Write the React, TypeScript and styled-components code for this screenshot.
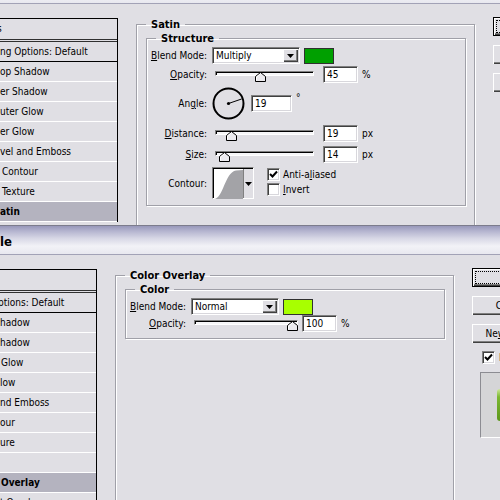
import * as React from "react";
import styled, { createGlobalStyle } from "styled-components";

const COLORS = {
	FACE: "#e0dfe4",
	ETCH: "#a0a0a8",
	SHADOW: "#808080",
	DARK: "#404040",
	WHITE: "#ffffff",
	SELECTED: "#b4b3bf",
	SATIN: "#00a000",
	OVERLAY: "#a8ff00"
};

const FONT = `"DejaVu Sans Condensed", "DejaVu Sans", "Liberation Sans", sans-serif`;

const GlobalStyle = createGlobalStyle`
	html, body {
		margin: 0;
		padding: 0;
		background: ${COLORS.FACE};
	}
	body {
		font-family: ${FONT};
		font-size: 10px;
		color: #000;
		overflow: hidden;
	}
`;

type ListItem = {
	text: string;
	indent?: number;
	kind?: "header" | "blend" | "effect";
	selected?: boolean;
};

export interface DialogProps {
	title?: string;
	listWidth: number;
	items: ListItem[];
	cutTop?: number;
	bodyHeight?: number;
	children: React.ReactNode;
}

const Dialog = ({ title, listWidth, items, cutTop = 0, bodyHeight, children }: DialogProps) => {
	return (
		<Frame $cutTop={cutTop}>
			<TitleBar>{title}</TitleBar>
			<Body $height={bodyHeight}>
				<StyleList $width={listWidth}>
					{items.map((item, i) => (
						<ListRow
							key={i}
							$kind={item.kind || "effect"}
							$selected={!!item.selected}
							$indent={item.indent || 0}
						>
							{item.text}
						</ListRow>
					))}
				</StyleList>
				<Panel>{children}</Panel>
				<ButtonColumn>
					<PushButton $default>
						<FocusRing>OK</FocusRing>
					</PushButton>
					<PushButton>Cancel</PushButton>
					<PushButton>
						Ne<Key>w</Key> Style...
					</PushButton>
					<PreviewToggle>
						<CheckBox checked />
						<span>Preview</span>
					</PreviewToggle>
					<PreviewBox>
						<PreviewBlob />
					</PreviewBox>
				</ButtonColumn>
			</Body>
		</Frame>
	);
};

const CheckBox = ({ checked = false }: { checked?: boolean }) => (
	<CheckSquare>
		{checked && (
			<svg width="9" height="9" viewBox="0 0 9 9">
				<path d="M1 4 L3.5 6.5 L8 1.5" fill="none" stroke="#000" strokeWidth="2" />
			</svg>
		)}
	</CheckSquare>
);

const DropArrow = () => (
	<svg width="7" height="4" viewBox="0 0 7 4">
		<path d="M0 0 H7 L3.5 4 Z" fill="#000" />
	</svg>
);

const Select = ({ value }: { value: string }) => (
	<SelectBox>
		<SelectText>{value}</SelectText>
		<SelectButton>
			<DropArrow />
		</SelectButton>
	</SelectBox>
);

const Slider = ({ pos, width }: { pos: number; width: number }) => (
	<SliderCell $width={width}>
		<Track $width={width} />
		<Thumb style={{ left: 3 + pos * (width - 11) }}>
			<svg width="11" height="10" viewBox="0 0 11 10">
				<path
					d="M0.5 4.5 L5.5 0.5 L10.5 4.5 V9.5 H0.5 Z"
					fill="#ecebef"
					stroke="#000"
				/>
				<path d="M1.5 8.5 V5 L5.5 1.8" fill="none" stroke="#fff" />
			</svg>
		</Thumb>
	</SliderCell>
);

const AngleDial = ({ angle }: { angle: number }) => {
	const r = (angle * Math.PI) / 180;
	const x = 16.5 + 14 * Math.cos(r);
	const y = 16.5 - 14 * Math.sin(r);
	return (
		<svg width="33" height="33" viewBox="0 0 33 33">
			<circle cx="16.5" cy="16.5" r="15" fill="none" stroke="#000" strokeWidth="2" />
			<line x1="16.5" y1="16.5" x2={x} y2={y} stroke="#000" strokeWidth="1" />
			<circle cx="16.5" cy="16.5" r="1.6" fill="#000" />
		</svg>
	);
};

const ContourPicker = () => (
	<ContourBox>
		<CurveArea>
			<svg width="29" height="30" viewBox="0 0 29 30">
				<path d="M0 30 C 9 30 11 3 22 1.5 L29 1 V30 Z" fill="#a3a3a7" />
			</svg>
		</CurveArea>
		<CurveButton>
			<DropArrow />
		</CurveButton>
	</ContourBox>
);

// only the part of each name that shows past the left edge
const satinItems: ListItem[] = [
	{ text: "s", indent: -3, kind: "header" },
	{ text: "ng Options: Default", kind: "blend" },
	{ text: "op Shadow" },
	{ text: "er Shadow" },
	{ text: "uter Glow" },
	{ text: "er Glow" },
	{ text: "vel and Emboss" },
	{ text: "Contour", indent: 2 },
	{ text: "Texture", indent: 2 },
	{ text: "atin", selected: true }
];

const overlayItems: ListItem[] = [
	{ text: "", kind: "header" },
	{ text: "ptions: Default", indent: -2, kind: "blend" },
	{ text: "hadow" },
	{ text: "hadow" },
	{ text: "Glow", indent: 1 },
	{ text: "low" },
	{ text: "nd Emboss" },
	{ text: "our" },
	{ text: "ure" },
	{ text: "" },
	{ text: "Overlay", indent: 1, selected: true },
	{ text: "t Overlay" }
];

const App = () => {
	return (
		<Screen>
			<GlobalStyle />
			<Dialog listWidth={118} items={satinItems} cutTop={25} bodyHeight={221}>
				<OuterGroup>
					<Legend>Satin</Legend>
					<InnerGroup>
						<Legend>Structure</Legend>
						<FieldRow $mt={2}>
							<FieldLabel>
								<Key>B</Key>lend Mode:
							</FieldLabel>
							<Select value="Multiply" />
							<Swatch $color={COLORS.SATIN} />
						</FieldRow>
						<FieldRow $mt={2}>
							<FieldLabel>
								<Key>O</Key>pacity:
							</FieldLabel>
							<Slider pos={0.45} width={99} />
							<NumberBox $width={35}>45</NumberBox>
							<Unit>%</Unit>
						</FieldRow>
						<FieldRow $mt={4}>
							<FieldLabel>
								An<Key>g</Key>le:
							</FieldLabel>
							<AngleDial angle={19} />
							<NumberBox $width={41} $gap={6}>
								19
							</NumberBox>
							<Unit $raised>°</Unit>
						</FieldRow>
						<FieldRow $mt={5}>
							<FieldLabel>
								<Key>D</Key>istance:
							</FieldLabel>
							<Slider pos={0.13} width={99} />
							<NumberBox $width={35}>19</NumberBox>
							<Unit>px</Unit>
						</FieldRow>
						<FieldRow $mt={4}>
							<FieldLabel>
								<Key>S</Key>ize:
							</FieldLabel>
							<Slider pos={0.05} width={99} />
							<NumberBox $width={35}>14</NumberBox>
							<Unit>px</Unit>
						</FieldRow>
						<FieldRow $mt={4}>
							<FieldLabel>Contour:</FieldLabel>
							<ContourPicker />
							<OptionColumn>
								<Option>
									<CheckBox checked />
									<span>
										Anti-a<Key>l</Key>iased
									</span>
								</Option>
								<Option>
									<CheckBox />
									<span>
										<Key>I</Key>nvert
									</span>
								</Option>
							</OptionColumn>
						</FieldRow>
					</InnerGroup>
				</OuterGroup>
			</Dialog>

			<Dialog title="le" listWidth={97} items={overlayItems}>
				<OuterGroup>
					<Legend>Color Overlay</Legend>
					<InnerGroup>
						<Legend>Color</Legend>
						<FieldRow $mt={2}>
							<FieldLabel>
								<Key>B</Key>lend Mode:
							</FieldLabel>
							<Select value="Normal" />
							<Swatch $color={COLORS.OVERLAY} />
						</FieldRow>
						<FieldRow $mt={0}>
							<FieldLabel>
								<Key>O</Key>pacity:
							</FieldLabel>
							<Slider pos={1} width={104} />
							<NumberBox $width={35} $gap={-2}>
								100
							</NumberBox>
							<Unit>%</Unit>
						</FieldRow>
					</InnerGroup>
				</OuterGroup>
			</Dialog>
		</Screen>
	);
};

const Screen = styled.div`
	width: 500px;
	height: 500px;
	overflow: hidden;
	display: flex;
	flex-direction: column;
	background: ${COLORS.FACE};
`;

const Frame = styled.div<{ $cutTop: number }>`
	flex-shrink: 0;
	margin-top: -${props => props.$cutTop}px;
	border-bottom: 1px solid #7c7c8c;
`;

const TitleBar = styled.div`
	box-sizing: border-box;
	height: 29px;
	padding-top: 3px;
	display: flex;
	align-items: center;
	font-size: 13px;
	font-weight: bold;
	white-space: nowrap;
	border-bottom: 1px solid #a2a2b6;
	background: linear-gradient(
		to bottom,
		#9898ba 0%,
		#b4b4cf 18%,
		#d8d8e6 45%,
		#f2f2f7 72%,
		#e8e8ef 100%
	);
`;

const Body = styled.div<{ $height?: number }>`
	display: flex;
	align-items: flex-start;
	padding-top: 14px;
	box-sizing: border-box;
	height: ${props => (props.$height ? `${props.$height}px` : "auto")};
	overflow: hidden;
`;

const StyleList = styled.div<{ $width: number }>`
	flex-shrink: 0;
	box-sizing: border-box;
	width: ${props => props.$width}px;
	border-top: 1px solid #000;
	border-right: 1px solid #000;
	margin-right: 18px;
`;

const ListRow = styled.div<{ $kind: string; $selected: boolean; $indent: number }>`
	height: ${props => (props.$kind === "header" ? 20 : 19)}px;
	line-height: 19px;
	padding-left: ${props => Math.max(props.$indent, 0)}px;
	text-indent: ${props => Math.min(props.$indent, 0)}px;
	white-space: nowrap;
	overflow: hidden;
	font-size: 10px;
	font-weight: ${props => (props.$selected ? "bold" : "normal")};
	background: ${props => (props.$selected ? COLORS.SELECTED : "transparent")};
	border-bottom: ${props =>
		props.$kind === "header"
			? "3px double #303030"
			: props.$kind === "blend"
			? "1px solid #000"
			: "1px solid #fff"};
`;

const Panel = styled.div`
	flex-shrink: 0;
	width: 340px;
`;

const OuterGroup = styled.fieldset`
	box-sizing: border-box;
	width: 339px;
	min-height: 420px;
	margin: 0;
	padding: 0;
	border: 1px solid ${COLORS.ETCH};
	box-shadow: 1px 1px 0 #fff, inset 1px 1px 0 #fff;
`;

const InnerGroup = styled.fieldset`
	box-sizing: border-box;
	width: 320px;
	margin: 1px 0 0 9px;
	padding: 0 0 6px 0;
	border: 1px solid ${COLORS.ETCH};
	box-shadow: 1px 1px 0 #fff, inset 1px 1px 0 #fff;
`;

const Legend = styled.legend`
	margin-left: 9px;
	padding: 0 5px;
	font-size: 11px;
	line-height: 13px;
	font-weight: bold;
`;

const FieldRow = styled.div<{ $mt: number }>`
	display: flex;
	align-items: center;
	margin-top: ${props => props.$mt}px;
	white-space: nowrap;
`;

const FieldLabel = styled.div`
	flex-shrink: 0;
	width: 60px;
	margin-right: 5px;
	text-align: right;
	white-space: nowrap;
`;

const Key = styled.span`
	text-decoration: underline;
`;

const Sunken = styled.div`
	box-sizing: border-box;
	height: 17px;
	background: #fff;
	border: 1px solid;
	border-color: ${COLORS.SHADOW} #fff #fff ${COLORS.SHADOW};
	box-shadow: inset 1px 1px 0 ${COLORS.DARK}, inset -1px -1px 0 #d8d7dc;
`;

const SelectBox = styled(Sunken)`
	width: 88px;
	display: flex;
	align-items: center;
	padding: 0 1px 0 3px;
`;

const SelectText = styled.span`
	flex: 1;
`;

const SelectButton = styled.div`
	box-sizing: border-box;
	width: 15px;
	height: 13px;
	display: flex;
	align-items: center;
	justify-content: center;
	background: ${COLORS.FACE};
	box-shadow: inset 1px 1px 0 #fff, inset -1px -1px 0 ${COLORS.DARK},
		inset -2px -2px 0 ${COLORS.SHADOW};
`;

const Swatch = styled.div<{ $color: string }>`
	box-sizing: border-box;
	width: 30px;
	height: 16px;
	margin-left: 4px;
	border: 1px solid #303030;
	background: ${props => props.$color};
`;

const SliderCell = styled.div<{ $width: number }>`
	position: relative;
	flex-shrink: 0;
	box-sizing: border-box;
	width: ${props => props.$width + 9}px;
	height: 17px;
	padding: 5px 0 0 3px;
`;

const Track = styled.div<{ $width: number }>`
	box-sizing: border-box;
	width: ${props => props.$width}px;
	height: 5px;
	background: #f6f6f8;
	border: 1px solid;
	border-color: ${COLORS.SHADOW} #fff #fff ${COLORS.SHADOW};
	box-shadow: inset 1px 1px 0 #000;
`;

const Thumb = styled.div`
	position: absolute;
	top: 6px;
	width: 11px;
	height: 10px;
	line-height: 0;
`;

const NumberBox = styled(Sunken)<{ $width: number; $gap?: number }>`
	width: ${props => props.$width}px;
	margin-left: ${props => (props.$gap === undefined ? 3 : props.$gap)}px;
	padding-left: 3px;
	line-height: 15px;
`;

const Unit = styled.span<{ $raised?: boolean }>`
	margin-left: 4px;
	margin-bottom: ${props => (props.$raised ? 12 : 0)}px;
`;

const ContourBox = styled.div`
	box-sizing: border-box;
	display: flex;
	width: 42px;
	height: 32px;
	border: 1px solid;
	border-color: ${COLORS.SHADOW} #fff #fff ${COLORS.SHADOW};
	box-shadow: inset 1px 1px 0 #000;
	padding: 1px 0 0 1px;
	background: #fff;
`;

const CurveArea = styled.div`
	width: 29px;
	line-height: 0;
`;

const CurveButton = styled.div`
	flex: 1;
	display: flex;
	align-items: center;
	justify-content: center;
	background: ${COLORS.FACE};
	border-left: 1px solid ${COLORS.SHADOW};
`;

const OptionColumn = styled.div`
	align-self: flex-start;
	display: flex;
	flex-direction: column;
	gap: 2px;
	margin-left: 13px;
	padding-top: 1px;
`;

const Option = styled.div`
	display: flex;
	align-items: center;
	gap: 3px;
`;

const CheckSquare = styled.div`
	box-sizing: border-box;
	width: 13px;
	height: 13px;
	display: flex;
	align-items: center;
	justify-content: center;
	background: #fff;
	border: 1px solid;
	border-color: ${COLORS.SHADOW} #fff #fff ${COLORS.SHADOW};
	box-shadow: inset 1px 1px 0 ${COLORS.DARK}, inset -1px -1px 0 #d8d7dc;
`;

const ButtonColumn = styled.div`
	flex-shrink: 0;
	display: flex;
	flex-direction: column;
	gap: 9px;
	margin: -1px 0 0 17px;
`;

const PushButton = styled.div<{ $default?: boolean }>`
	box-sizing: border-box;
	width: 78px;
	height: 19px;
	display: flex;
	align-items: center;
	justify-content: center;
	padding: ${props => (props.$default ? "2px" : "0")};
	background: ${COLORS.FACE};
	border: ${props => (props.$default ? "1px solid #000" : "none")};
	box-shadow: inset 1px 1px 0 #fff, inset -1px -1px 0 ${COLORS.DARK},
		inset -2px -2px 0 ${COLORS.SHADOW};
	white-space: nowrap;
`;

const FocusRing = styled.div`
	box-sizing: border-box;
	width: 100%;
	height: 100%;
	display: flex;
	align-items: center;
	justify-content: center;
	border: 1px dotted #000;
`;

const PreviewToggle = styled.div`
	display: flex;
	align-items: center;
	gap: 4px;
	margin: -1px 0 0 10px;
`;

const PreviewBox = styled.div`
	box-sizing: border-box;
	width: 60px;
	height: 66px;
	margin: -1px 0 0 8px;
	padding: 16px 0 0 16px;
	background: #d5d5d7;
	border: 1px solid;
	border-color: #8c8c92 #fff #fff #8c8c92;
`;

const PreviewBlob = styled.div`
	width: 40px;
	height: 32px;
	border-radius: 3px;
	background: linear-gradient(to bottom, #cde89a 0%, #7cb832 25%, #5c961a 100%);
	filter: blur(0.7px);
`;

export default App;
